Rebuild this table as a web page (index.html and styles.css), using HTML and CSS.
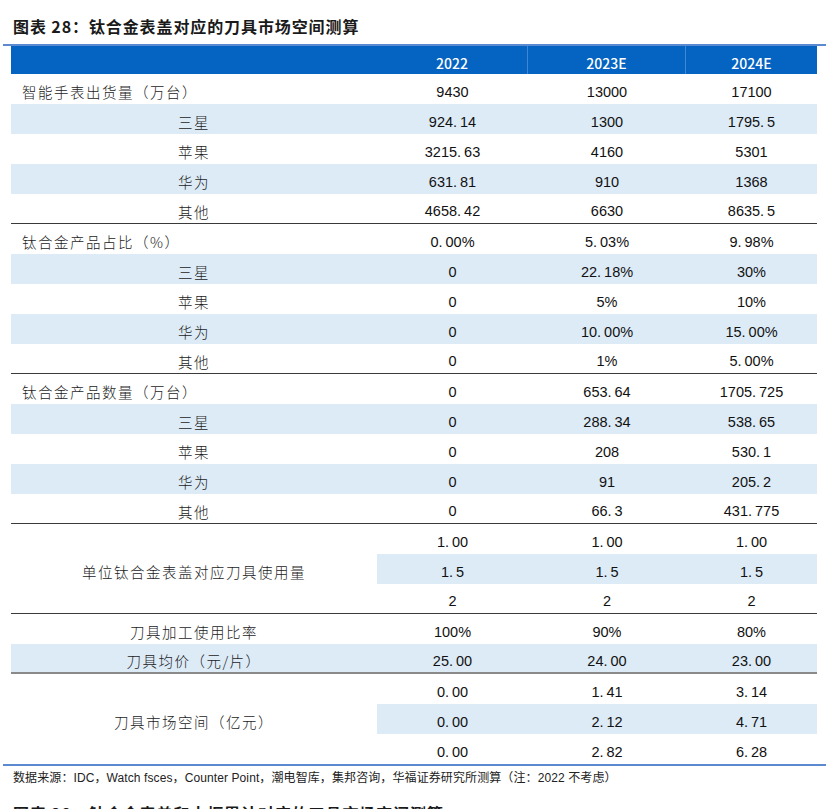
FILE: index.html
```html
<!DOCTYPE html>
<html lang="zh-CN">
<head>
<meta charset="utf-8">
<title>钛合金表盖对应的刀具市场空间测算</title>
<link rel="stylesheet" href="styles.css">
</head>
<body>
<div class="title">图表 28：钛合金表盖对应的刀具市场空间测算</div>
<div class="frame">
  <div class="grid">
    <div class="hd"></div>
    <div class="hd num sep">2022</div>
    <div class="hd num sep">2023E</div>
    <div class="hd num">2024E</div>

    <div class="lab grp">智能手表出货量（万台）</div>
    <div class="num">9430</div><div class="num">13000</div><div class="num">17100</div>

    <div class="lab sub bl">三星</div>
    <div class="num bl">924<span class="d">.</span>14</div><div class="num bl">1300</div><div class="num bl">1795<span class="d">.</span>5</div>

    <div class="lab sub">苹果</div>
    <div class="num">3215<span class="d">.</span>63</div><div class="num">4160</div><div class="num">5301</div>

    <div class="lab sub bl">华为</div>
    <div class="num bl">631<span class="d">.</span>81</div><div class="num bl">910</div><div class="num bl">1368</div>

    <div class="lab sub ln">其他</div>
    <div class="num ln">4658<span class="d">.</span>42</div><div class="num ln">6630</div><div class="num ln">8635<span class="d">.</span>5</div>

    <div class="lab grp">钛合金产品占比（%）</div>
    <div class="num">0<span class="d">.</span>00%</div><div class="num">5<span class="d">.</span>03%</div><div class="num">9<span class="d">.</span>98%</div>

    <div class="lab sub bl">三星</div>
    <div class="num bl">0</div><div class="num bl">22<span class="d">.</span>18%</div><div class="num bl">30%</div>

    <div class="lab sub">苹果</div>
    <div class="num">0</div><div class="num">5%</div><div class="num">10%</div>

    <div class="lab sub bl">华为</div>
    <div class="num bl">0</div><div class="num bl">10<span class="d">.</span>00%</div><div class="num bl">15<span class="d">.</span>00%</div>

    <div class="lab sub ln">其他</div>
    <div class="num ln">0</div><div class="num ln">1%</div><div class="num ln">5<span class="d">.</span>00%</div>

    <div class="lab grp">钛合金产品数量（万台）</div>
    <div class="num">0</div><div class="num">653<span class="d">.</span>64</div><div class="num">1705<span class="d">.</span>725</div>

    <div class="lab sub bl">三星</div>
    <div class="num bl">0</div><div class="num bl">288<span class="d">.</span>34</div><div class="num bl">538<span class="d">.</span>65</div>

    <div class="lab sub">苹果</div>
    <div class="num">0</div><div class="num">208</div><div class="num">530<span class="d">.</span>1</div>

    <div class="lab sub bl">华为</div>
    <div class="num bl">0</div><div class="num bl">91</div><div class="num bl">205<span class="d">.</span>2</div>

    <div class="lab sub ln">其他</div>
    <div class="num ln">0</div><div class="num ln">66<span class="d">.</span>3</div><div class="num ln">431<span class="d">.</span>775</div>

    <div class="lab sub span3 ln">单位钛合金表盖对应刀具使用量</div>
    <div class="num">1<span class="d">.</span>00</div><div class="num">1<span class="d">.</span>00</div><div class="num">1<span class="d">.</span>00</div>
    <div class="num bl">1<span class="d">.</span>5</div><div class="num bl">1<span class="d">.</span>5</div><div class="num bl">1<span class="d">.</span>5</div>
    <div class="num ln">2</div><div class="num ln">2</div><div class="num ln">2</div>

    <div class="lab sub">刀具加工使用比率</div>
    <div class="num">100%</div><div class="num">90%</div><div class="num">80%</div>

    <div class="lab sub bl ln2">刀具均价（元/片）</div>
    <div class="num bl ln2">25<span class="d">.</span>00</div><div class="num bl ln2">24<span class="d">.</span>00</div><div class="num bl ln2">23<span class="d">.</span>00</div>

    <div class="lab sub span3">刀具市场空间（亿元）</div>
    <div class="num">0<span class="d">.</span>00</div><div class="num">1<span class="d">.</span>41</div><div class="num">3<span class="d">.</span>14</div>
    <div class="num bl">0<span class="d">.</span>00</div><div class="num bl">2<span class="d">.</span>12</div><div class="num bl">4<span class="d">.</span>71</div>
    <div class="num">0<span class="d">.</span>00</div><div class="num">2<span class="d">.</span>82</div><div class="num">6<span class="d">.</span>28</div>
  </div>
</div>
<div class="source">数据来源：IDC，Watch fsces，Counter Point，潮电智库，集邦咨询，华福证券研究所测算（注：2022 不考虑）</div>
<div class="title next">图表 29：钛合金表盖和中框累计对应的刀具市场空间测算</div>
</body>
</html>
```

FILE: styles.css
```css
html, body {
  margin: 0;
  padding: 0;
  background: #ffffff;
}

body {
  font-family: "Liberation Sans", "Noto Sans CJK SC", sans-serif;
  color: #111111;
}

.title {
  padding: 16px 0 0 13px;
  height: 20px;
  line-height: 20px;
  margin-bottom: 8px;
  font-family: "Noto Sans CJK SC", sans-serif;
  font-weight: 700;
  font-size: 16px;
  letter-spacing: 0.9px;
  color: #1a1a1a;
}

.title.next {
  margin-top: 17px;
  padding-top: 0;
}

.frame {
  margin-left: 3px;
  width: 823px;
  border-top: 2px solid #5b8ad0;
  border-bottom: 2px solid #5b8ad0;
}

.grid {
  display: grid;
  grid-template-columns: 366px 151px 158px 131px;
  margin-left: 8px;
  width: 806px;
}

.grid > div {
  box-sizing: border-box;
  height: 30px;
  padding-top: 5px;
  display: flex;
  align-items: center;
}

.grid > .hd {
  height: 28px;
  padding-top: 5px;
  background: #0563c1;
  color: #ffffff;
  font-family: "Noto Sans CJK SC", sans-serif;
  font-weight: 500;
  font-size: 14px;
}

.grid > .hd.sep {
  border-right: 1px solid #3f86d4;
}

.num {
  justify-content: center;
  font-size: 14.5px;
  color: #111111;
}

.d {
  margin-right: 3px;
}

.lab {
  font-family: "Noto Sans CJK SC", sans-serif;
  font-weight: 300;
  font-size: 14.5px;
  letter-spacing: 1.5px;
  color: #1c1c1c;
}

.lab.grp {
  padding-left: 11px;
}

.lab.sub {
  justify-content: center;
}

.grid > .span3 {
  grid-row: span 3;
  height: 90px;
}

.bl {
  background: #ddebf7;
}

.ln {
  border-bottom: 1px solid #3a3a3a;
}

.ln2 {
  border-bottom: 2px solid #8a8a8a;
}

.source {
  padding-left: 13px;
  margin-top: 4px;
  height: 16px;
  line-height: 16px;
  font-family: "Liberation Sans", "Noto Sans CJK SC", sans-serif;
  font-size: 12px;
  letter-spacing: 0.1px;
  color: #222222;
}
```
